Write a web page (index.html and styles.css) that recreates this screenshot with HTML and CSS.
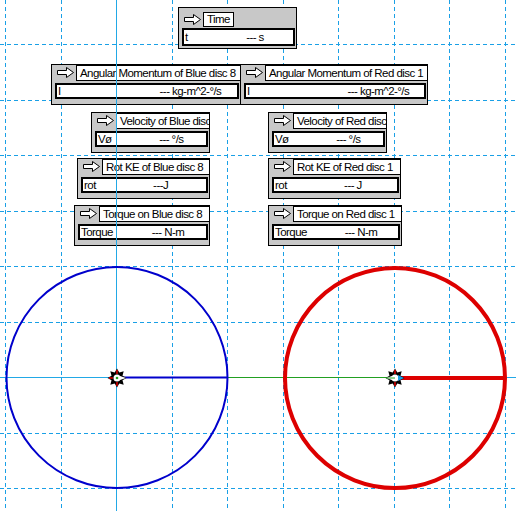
FILE: index.html
```html
<!DOCTYPE html>
<html>
<head>
<meta charset="utf-8">
<link rel="stylesheet" href="styles.css">
</head>
<body>
<div class="stage">
  <svg class="layer grid" width="516" height="511" viewBox="0 0 516 511">
    <g stroke="#1aa0e6" stroke-width="1" stroke-dasharray="4 3">
      <line x1="5.5" y1="0" x2="5.5" y2="511"/>
      <line x1="61.5" y1="0" x2="61.5" y2="511"/>
      <line x1="172.5" y1="0" x2="172.5" y2="511"/>
      <line x1="227.5" y1="0" x2="227.5" y2="511"/>
      <line x1="283.5" y1="0" x2="283.5" y2="511"/>
      <line x1="338.5" y1="0" x2="338.5" y2="511"/>
      <line x1="394.5" y1="0" x2="394.5" y2="511"/>
      <line x1="449.5" y1="0" x2="449.5" y2="511"/>
      <line x1="505.5" y1="0" x2="505.5" y2="511"/>
      <line x1="0" y1="44.5" x2="516" y2="44.5"/>
      <line x1="0" y1="100.5" x2="516" y2="100.5"/>
      <line x1="0" y1="155.5" x2="516" y2="155.5"/>
      <line x1="0" y1="211.5" x2="516" y2="211.5"/>
      <line x1="0" y1="266.5" x2="516" y2="266.5"/>
      <line x1="0" y1="322.5" x2="516" y2="322.5"/>
      <line x1="0" y1="433.5" x2="516" y2="433.5"/>
      <line x1="0" y1="488.5" x2="516" y2="488.5"/>
    </g>
  </svg>

  <div class="box b-time">
    <div class="head"><span class="arrow"><svg width="18" height="12" viewBox="0 0 18 12"><polygon points="0.5,3.5 9.5,3.5 9.5,0.5 16.5,5.5 9.5,10.5 9.5,7.5 0.5,7.5" fill="#fff" stroke="#000"/></svg></span><span class="title">Time</span></div>
    <div class="field"><span class="name">t</span><span class="val">--- s</span></div>
  </div>

  <div class="box b-angb">
    <div class="head"><span class="arrow"><svg width="18" height="12" viewBox="0 0 18 12"><polygon points="0.5,3.5 9.5,3.5 9.5,0.5 16.5,5.5 9.5,10.5 9.5,7.5 0.5,7.5" fill="#fff" stroke="#000"/></svg></span><span class="title">Angular Momentum of Blue disc 8</span></div>
    <div class="field"><span class="name">I</span><span class="val">--- kg-m^2-°/s</span></div>
  </div>

  <div class="box b-angr">
    <div class="head"><span class="arrow"><svg width="18" height="12" viewBox="0 0 18 12"><polygon points="0.5,3.5 9.5,3.5 9.5,0.5 16.5,5.5 9.5,10.5 9.5,7.5 0.5,7.5" fill="#fff" stroke="#000"/></svg></span><span class="title">Angular Momentum of Red disc 1</span></div>
    <div class="field"><span class="name">I</span><span class="val">--- kg-m^2-°/s</span></div>
  </div>

  <div class="box b-velb">
    <div class="head"><span class="arrow"><svg width="18" height="12" viewBox="0 0 18 12"><polygon points="0.5,3.5 9.5,3.5 9.5,0.5 16.5,5.5 9.5,10.5 9.5,7.5 0.5,7.5" fill="#fff" stroke="#000"/></svg></span><span class="title">Velocity of Blue disc 8</span></div>
    <div class="field"><span class="name">Vø</span><span class="val">--- °/s</span></div>
  </div>

  <div class="box b-rotb">
    <div class="head"><span class="arrow"><svg width="18" height="12" viewBox="0 0 18 12"><polygon points="0.5,3.5 9.5,3.5 9.5,0.5 16.5,5.5 9.5,10.5 9.5,7.5 0.5,7.5" fill="#fff" stroke="#000"/></svg></span><span class="title">Rot KE of Blue disc 8</span></div>
    <div class="field"><span class="name">rot</span><span class="val">---J</span></div>
  </div>

  <div class="box b-torb">
    <div class="head"><span class="arrow"><svg width="18" height="12" viewBox="0 0 18 12"><polygon points="0.5,3.5 9.5,3.5 9.5,0.5 16.5,5.5 9.5,10.5 9.5,7.5 0.5,7.5" fill="#fff" stroke="#000"/></svg></span><span class="title">Torque on Blue disc 8</span></div>
    <div class="field"><span class="name">Torque</span><span class="val">--- N-m</span></div>
  </div>

  <div class="box b-velr">
    <div class="head"><span class="arrow"><svg width="18" height="12" viewBox="0 0 18 12"><polygon points="0.5,3.5 9.5,3.5 9.5,0.5 16.5,5.5 9.5,10.5 9.5,7.5 0.5,7.5" fill="#fff" stroke="#000"/></svg></span><span class="title">Velocity of Red disc 1</span></div>
    <div class="field"><span class="name">Vø</span><span class="val">--- °/s</span></div>
  </div>

  <div class="box b-rotr">
    <div class="head"><span class="arrow"><svg width="18" height="12" viewBox="0 0 18 12"><polygon points="0.5,3.5 9.5,3.5 9.5,0.5 16.5,5.5 9.5,10.5 9.5,7.5 0.5,7.5" fill="#fff" stroke="#000"/></svg></span><span class="title">Rot KE of Red disc 1</span></div>
    <div class="field"><span class="name">rot</span><span class="val">--- J</span></div>
  </div>

  <div class="box b-torr">
    <div class="head"><span class="arrow"><svg width="18" height="12" viewBox="0 0 18 12"><polygon points="0.5,3.5 9.5,3.5 9.5,0.5 16.5,5.5 9.5,10.5 9.5,7.5 0.5,7.5" fill="#fff" stroke="#000"/></svg></span><span class="title">Torque on Red disc 1</span></div>
    <div class="field"><span class="name">Torque</span><span class="val">--- N-m</span></div>
  </div>

  <svg class="layer over" width="516" height="511" viewBox="0 0 516 511">
    <line x1="116.5" y1="0" x2="116.5" y2="511" stroke="#22a8e6" stroke-width="1"/>
    <line x1="0" y1="377.5" x2="516" y2="377.5" stroke="#22a8e6" stroke-width="1"/>
    <line x1="117" y1="377.5" x2="394" y2="377.5" stroke="#22a022" stroke-width="1"/>
    <circle cx="117" cy="377.5" r="110.5" fill="none" stroke="#0000cc" stroke-width="2"/>
    <line x1="117" y1="377.5" x2="228" y2="377.5" stroke="#0000cc" stroke-width="2"/>
    <circle cx="395" cy="378" r="110" fill="none" stroke="#dd0000" stroke-width="4"/>
    <line x1="395" y1="378" x2="506" y2="378" stroke="#dd0000" stroke-width="4"/>

    <g transform="translate(117,378)">
      <polygon points="0,-9.5 2.3,-5.5 6.7,-6.7 5.5,-2.3 9.5,0 5.5,2.3 6.7,6.7 2.3,5.5 0,9.5 -2.3,5.5 -6.7,6.7 -5.5,2.3 -9.5,0 -5.5,-2.3 -6.7,-6.7 -2.3,-5.5" fill="#000"/>
      <line x1="0" y1="-8" x2="0" y2="-4" stroke="#e00000" stroke-width="1.5"/>
      <line x1="0" y1="4" x2="0" y2="8" stroke="#e00000" stroke-width="1.5"/>
      <line x1="-8" y1="0" x2="-4" y2="0" stroke="#e00000" stroke-width="1.5"/>
      <circle cx="0" cy="0" r="3.5" fill="#fff"/>
      <polygon points="3,-2 9,0 3,2" fill="#fff"/>
      <circle cx="0" cy="0" r="1.3" fill="#22a022"/>
    </g>
    <g transform="translate(395,378)">
      <polygon points="0,-9.5 2.3,-5.5 6.7,-6.7 5.5,-2.3 9.5,0 5.5,2.3 6.7,6.7 2.3,5.5 0,9.5 -2.3,5.5 -6.7,6.7 -5.5,2.3 -9.5,0 -5.5,-2.3 -6.7,-6.7 -2.3,-5.5" fill="#000"/>
      <line x1="0" y1="-8" x2="0" y2="-4" stroke="#e00000" stroke-width="1.5"/>
      <line x1="0" y1="4" x2="0" y2="8" stroke="#e00000" stroke-width="1.5"/>
      <polygon points="-9,0 -3,-2 -3,2" fill="#fff"/>
      <circle cx="0" cy="0" r="3.5" fill="#fff"/>
      <polygon points="3,-3 9,0 3,3" fill="#1aa0e6"/>
      <line x1="-9" y1="0" x2="0" y2="0" stroke="#22a022" stroke-width="1"/>
    </g>
  </svg>
</div>
</body>
</html>
```

FILE: styles.css
```css
html, body {
  margin: 0;
  padding: 0;
  background: #fff;
}

.stage {
  position: relative;
  width: 516px;
  height: 511px;
  overflow: hidden;
  background: #fff;
  font-family: "Liberation Sans", Arial, sans-serif;
  font-size: 11.5px;
  letter-spacing: -0.55px;
  color: #000;
}

.layer {
  position: absolute;
  left: 0;
  top: 0;
  display: block;
}

.over {
  pointer-events: none;
}

.box {
  position: absolute;
  box-sizing: border-box;
  height: 41px;
  border: 1px solid #000;
  background: #c8c8c8;
  display: flex;
  flex-direction: column;
}

.head {
  display: flex;
  height: 16px;
}

.arrow {
  width: 24px;
  flex: none;
  display: flex;
  align-items: center;
  padding-left: 5px;
  box-sizing: border-box;
}

.arrow svg {
  display: block;
}

.title {
  flex: 1;
  min-width: 0;
  box-sizing: border-box;
  border: 1px solid #000;
  background: #fff;
  margin-right: -1px;
  padding-left: 3px;
  line-height: 14px;
  white-space: nowrap;
  overflow: hidden;
}

.field {
  display: flex;
  box-sizing: border-box;
  height: 16px;
  margin: 2px 1px 0 3px;
  border: 2px solid #000;
  background: #fff;
  line-height: 12px;
  white-space: nowrap;
  overflow: hidden;
}

.name {
  width: 57%;
  flex: none;
  padding-left: 1px;
  box-sizing: border-box;
}

.val {
  flex: 1;
}

.b-time { left: 178px; top: 7px; width: 119px; height: 42px; padding-top: 4px; }
.b-time .head { height: 15px; }
.b-time .title { flex: none; margin-right: 0; padding-right: 3px; line-height: 13px; }
.b-time .field { margin-top: 1px; height: 18px; line-height: 14px; }

.b-angb { left: 51px; top: 64px; width: 190px; }
.b-angr { left: 240px; top: 64px; width: 188px; }
.b-velb { left: 91px; top: 112px; width: 119px; }
.b-rotb { left: 77px; top: 158px; width: 133px; }
.b-torb { left: 74px; top: 205px; width: 136px; }
.b-velr { left: 268px; top: 112px; width: 119px; }
.b-rotr { left: 268px; top: 158px; width: 133px; }
.b-torr { left: 268px; top: 205px; width: 134px; }
```
